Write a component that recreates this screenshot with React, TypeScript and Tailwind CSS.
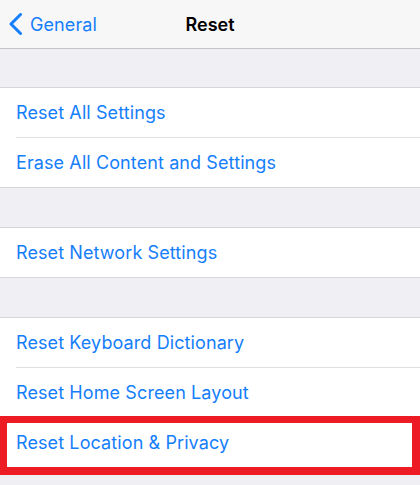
import React from "react";

const font = { fontFamily: "Inter, 'Liberation Sans', sans-serif" };

function Row({ label, sep, highlight }: { label: string; sep?: boolean; highlight?: boolean }) {
  return (
    <div className="relative">
      <div className="h-[49px] flex items-center pl-4 text-[18px] text-[#157efb] tracking-[0.1px]">{label}</div>
      {sep && <div className="ml-4 h-px bg-[#e0e0e4]" />}
      {highlight && (
        <div className="absolute left-0 right-0 top-[-2px] bottom-[-8px] border-[7px] border-r-8 border-b-8 border-[#ed1c24] pointer-events-none" />
      )}
    </div>
  );
}

function Group({ children }: { children: React.ReactNode }) {
  return <div className="bg-white border-t border-b border-[#d6d6da]">{children}</div>;
}

export default function App() {
  return (
    <div className="w-[420px] h-[485px] overflow-hidden bg-[#efeff4]" style={font}>
      <div className="h-[49px] bg-[#f7f7f8] border-b border-[#c4c4c8] relative flex items-center">
        <div className="flex items-center pl-2 text-[#157efb] text-[18px] tracking-[0.1px]">
          <svg width="15" height="22" viewBox="0 0 15 22" className="mr-[7px]">
            <path d="M12.5 1.5 L3 11 L12.5 20.5" fill="none" stroke="#157efb" strokeWidth="3" strokeLinecap="round" strokeLinejoin="round" />
          </svg>
          <span>General</span>
        </div>
        <div className="absolute left-0 right-0 text-center text-[18px] font-semibold text-black pointer-events-none">Reset</div>
      </div>
      <div className="h-[38px]" />
      <Group>
        <Row label="Reset All Settings" sep />
        <Row label="Erase All Content and Settings" />
      </Group>
      <div className="h-[39px]" />
      <Group>
        <Row label="Reset Network Settings" />
      </Group>
      <div className="h-[39px]" />
      <Group>
        <Row label="Reset Keyboard Dictionary" sep />
        <Row label="Reset Home Screen Layout" sep />
        <Row label="Reset Location & Privacy" highlight />
      </Group>
    </div>
  );
}
